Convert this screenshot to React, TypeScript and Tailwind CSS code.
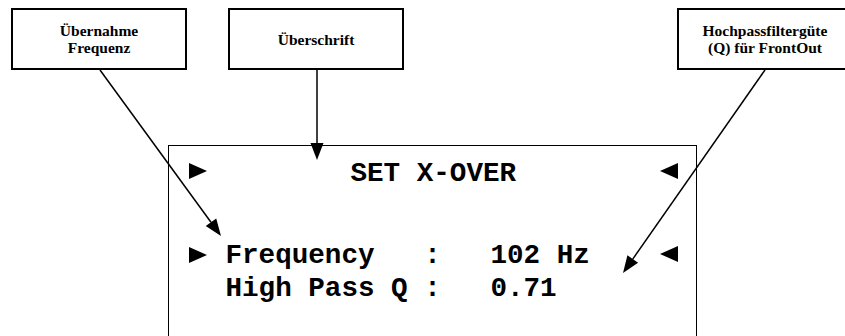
import React from "react";

type Pt = [number, number];

function arrowHead(from: Pt, tip: Pt, len = 17, half = 6.5) {
  const dx = tip[0] - from[0];
  const dy = tip[1] - from[1];
  const d = Math.hypot(dx, dy);
  const ux = dx / d;
  const uy = dy / d;
  const bx = tip[0] - ux * len;
  const by = tip[1] - uy * len;
  const px = -uy * half;
  const py = ux * half;
  return {
    base: [bx, by] as Pt,
    points: `${tip[0]},${tip[1]} ${bx + px},${by + py} ${bx - px},${by - py}`,
  };
}

const arrows: { from: Pt; tip: Pt }[] = [
  { from: [100, 70], tip: [221, 236] },
  { from: [317, 70], tip: [317, 160] },
  { from: [765, 70], tip: [623, 273] },
];

function Callout({ lines, className }: { lines: string[]; className: string }) {
  return (
    <div
      className={`h-[62px] shrink-0 border-2 border-black flex flex-col items-center justify-center text-[15.5px] leading-[17px] font-bold text-black ${className}`}
      style={{ fontFamily: '"Liberation Serif", "Times New Roman", serif' }}
    >
      {lines.map((l) => (
        <span key={l}>{l}</span>
      ))}
    </div>
  );
}

function Right({ className }: { className: string }) {
  return (
    <svg width="18" height="16" viewBox="0 0 18 16" className={`shrink-0 ${className}`}>
      <polygon points="0,0 18,8 0,16" fill="black" />
    </svg>
  );
}

function Left({ className }: { className: string }) {
  return (
    <svg width="18" height="16" viewBox="0 0 18 16" className={`shrink-0 ${className}`}>
      <polygon points="18,0 0,8 18,16" fill="black" />
    </svg>
  );
}

export default function App() {
  return (
    <div className="relative w-[845px] h-[336px] overflow-hidden bg-white pt-[8px]">
      <div className="flex">
        <Callout lines={["Übernahme", "Frequenz"]} className="ml-[11px] w-[176px]" />
        <Callout lines={["Überschrift"]} className="ml-[41px] w-[176px]" />
        <Callout lines={["Hochpassfiltergüte", "(Q) für FrontOut"]} className="ml-[273px] w-[176px]" />
      </div>

      <div
        className="mt-[75px] ml-[168px] w-[529px] h-[220px] border-[1.5px] border-black pt-[11px] text-[27.6px] leading-[33px] font-bold text-black"
        style={{ fontFamily: '"Courier New", "Nimbus Mono PS", "Nimbus Mono L", "Liberation Mono", monospace' }}
      >
        <div className="flex items-start h-[33px]">
          <Right className="ml-[19.5px] mt-[6px]" />
          <span className="ml-[19px] pl-[125px] flex-1 whitespace-pre">SET X-OVER</span>
          <Left className="mr-[18.5px] mt-[6px]" />
        </div>
        <div className="flex items-start h-[33px] mt-[49px]">
          <Right className="ml-[19.5px] mt-[8px]" />
          <span className="ml-[19px] flex-1 whitespace-pre">Frequency   :   102 Hz</span>
          <Left className="mr-[18.5px] mt-[7px]" />
        </div>
        <div className="flex items-start h-[33px]">
          <span className="ml-[56.5px] flex-1 whitespace-pre">High Pass Q :   0.71</span>
        </div>
      </div>

      <svg className="absolute inset-0 pointer-events-none" width="845" height="336">
        {arrows.map((a, i) => {
          const h = arrowHead(a.from, a.tip);
          return (
            <g key={i}>
              <line x1={a.from[0]} y1={a.from[1]} x2={h.base[0]} y2={h.base[1]} stroke="black" strokeWidth="1.5" />
              <polygon points={h.points} fill="black" />
            </g>
          );
        })}
      </svg>
    </div>
  );
}
